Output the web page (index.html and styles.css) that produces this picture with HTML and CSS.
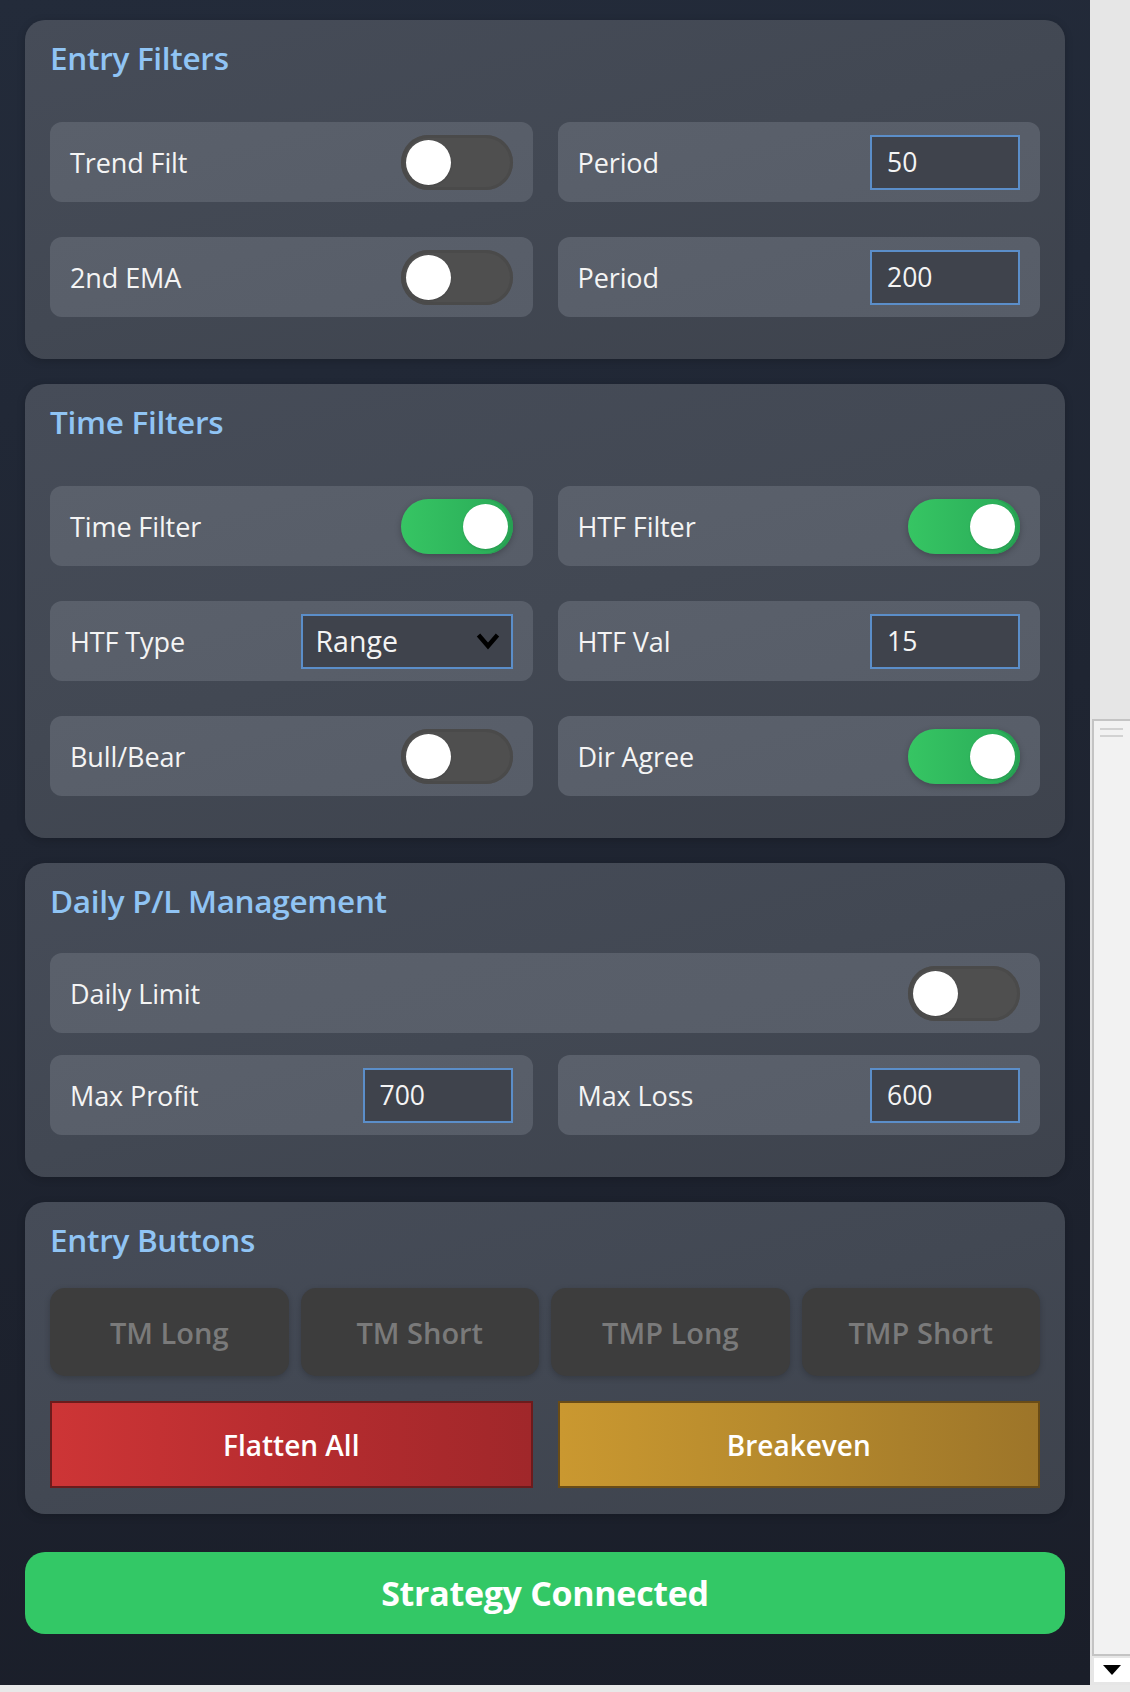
FILE: index.html
```html
<!DOCTYPE html>
<html lang="en">
<head>
<meta charset="utf-8">
<title>Strategy Panel</title>
<link rel="stylesheet" href="styles.css">
</head>
<body>
<div class="window">
  <div class="viewport">
    <main class="panel">
      <section class="card card-entry">
        <h2 class="card-title">Entry Filters</h2>
        <div class="grid">
          <div class="row"><span class="label">Trend Filt</span><span class="toggle"><span class="knob"></span></span></div>
          <div class="row"><span class="label">Period</span><span class="field">50</span></div>
          <div class="row"><span class="label">2nd EMA</span><span class="toggle"><span class="knob"></span></span></div>
          <div class="row"><span class="label">Period</span><span class="field">200</span></div>
        </div>
      </section>

      <section class="card card-time">
        <h2 class="card-title">Time Filters</h2>
        <div class="grid">
          <div class="row"><span class="label">Time Filter</span><span class="toggle on"><span class="knob"></span></span></div>
          <div class="row"><span class="label">HTF Filter</span><span class="toggle on"><span class="knob"></span></span></div>
          <div class="row"><span class="label">HTF Type</span>
            <span class="select"><span class="select-text">Range</span>
              <svg class="chevron" width="24" height="18" viewBox="0 0 24 18"><polyline points="2.5,3 12,14 21.5,3" fill="none" stroke="#000" stroke-width="4.5" stroke-linejoin="miter"/></svg>
            </span>
          </div>
          <div class="row"><span class="label">HTF Val</span><span class="field">15</span></div>
          <div class="row"><span class="label">Bull/Bear</span><span class="toggle"><span class="knob"></span></span></div>
          <div class="row"><span class="label">Dir Agree</span><span class="toggle on"><span class="knob"></span></span></div>
        </div>
      </section>

      <section class="card card-daily">
        <h2 class="card-title">Daily P/L Management</h2>
        <div class="grid grid-daily">
          <div class="row row-wide"><span class="label">Daily Limit</span><span class="toggle"><span class="knob"></span></span></div>
          <div class="row"><span class="label">Max Profit</span><span class="field">700</span></div>
          <div class="row"><span class="label">Max Loss</span><span class="field">600</span></div>
        </div>
      </section>

      <section class="card card-buttons">
        <h2 class="card-title">Entry Buttons</h2>
        <div class="entry-grid">
          <button class="entry-btn">TM Long</button>
          <button class="entry-btn">TM Short</button>
          <button class="entry-btn">TMP Long</button>
          <button class="entry-btn">TMP Short</button>
        </div>
        <div class="action-grid">
          <button class="action-btn flatten">Flatten All</button>
          <button class="action-btn breakeven">Breakeven</button>
        </div>
      </section>

      <button class="status">Strategy Connected</button>
    </main>

    <div class="vscroll">
      <div class="vtrack"></div>
      <div class="vthumb"><span class="grip"></span><span class="grip"></span></div>
      <div class="varrow">
        <svg width="18" height="10" viewBox="0 0 18 10"><polygon points="0,0 18,0 9,10" fill="#000"/></svg>
      </div>
    </div>
  </div>
  <div class="hstrip"></div>
</div>
</body>
</html>
```

FILE: styles.css
```css
html, body {
  margin: 0;
  padding: 0;
}

body {
  width: 1130px;
  height: 1692px;
  overflow: hidden;
  background: #e8e8e8;
  font-family: "Open Sans", "Noto Sans", "DejaVu Sans", sans-serif;
  color: #f2f2f2;
}

.window {
  display: flex;
  flex-direction: column;
  height: 1692px;
}

.viewport {
  display: flex;
  height: 1685px;
}

.panel {
  width: 1090px;
  box-sizing: border-box;
  padding: 20px 25px 0;
  background: linear-gradient(172deg, #232b3a 0%, #1f2532 45%, #1a1e29 100%);
  display: flex;
  flex-direction: column;
}

.card {
  border-radius: 20px;
  padding: 18px 25px 42px;
  background: linear-gradient(165deg, #464c58 0%, #424853 50%, #3e434d 100%);
  box-shadow: 0 2px 8px rgba(0, 0, 0, 0.18);
  margin-bottom: 25px;
}

.card-title {
  margin: 0 0 44px;
  font-size: 31.5px;
  line-height: 40px;
  font-weight: 600;
  color: #90c4f4;
  letter-spacing: -0.3px;
}

.card-daily .card-title {
  margin-bottom: 32px;
}

.card-buttons {
  padding-bottom: 26px;
}

.card-buttons .card-title {
  margin-bottom: 28px;
}

.grid {
  display: grid;
  grid-template-columns: 1fr 1fr;
  column-gap: 25px;
  row-gap: 35px;
}

.grid-daily {
  row-gap: 22px;
}

.row-wide {
  grid-column: 1 / 3;
}

.row {
  height: 80px;
  box-sizing: border-box;
  padding: 0 20px;
  border-radius: 12px;
  background: linear-gradient(165deg, #5a606b 0%, #575d68 100%);
  display: flex;
  align-items: center;
  justify-content: space-between;
}

.label {
  font-size: 27px;
  color: #f4f4f4;
  letter-spacing: -0.1px;
}

.toggle {
  width: 112px;
  height: 55px;
  box-sizing: border-box;
  padding: 5px;
  border-radius: 28px;
  background: #4f4f4f;
  box-shadow: inset 0 0 0 3px #4a4a4a;
  display: flex;
  align-items: center;
  justify-content: flex-start;
}

.toggle.on {
  justify-content: flex-end;
  background: linear-gradient(90deg, #36c563 0%, #2db25b 70%, #2aa957 100%);
  box-shadow: inset -3px 0 0 0 #27a052, 0 2px 6px rgba(0, 0, 0, 0.25);
}

.knob {
  width: 45px;
  height: 45px;
  border-radius: 50%;
  background: #ffffff;
  box-shadow: 0 1px 2px rgba(0, 0, 0, 0.15);
}

.field {
  width: 150px;
  height: 55px;
  box-sizing: border-box;
  border: 2px solid #5b8ec9;
  background: #3f434c;
  padding-left: 15px;
  display: flex;
  align-items: center;
  font-size: 26.5px;
  color: #f4f4f4;
}

.select {
  width: 212px;
  height: 55px;
  box-sizing: border-box;
  border: 2px solid #5b8ec9;
  background: #3f434c;
  padding: 0 11px 0 13px;
  display: flex;
  align-items: center;
  justify-content: space-between;
}

.select-text {
  font-size: 28.5px;
  color: #f4f4f4;
}

.chevron {
  display: block;
}

.entry-grid {
  display: grid;
  grid-template-columns: repeat(4, 1fr);
  column-gap: 12px;
  margin-bottom: 25px;
}

.entry-btn {
  height: 88px;
  border: none;
  border-radius: 15px;
  background: #3d3d3d;
  color: #7a7a7a;
  font-family: inherit;
  font-size: 29px;
  font-weight: 600;
  box-shadow: 0 2px 6px rgba(0, 0, 0, 0.2);
  padding: 0;
}

.action-grid {
  display: grid;
  grid-template-columns: 1fr 1fr;
  column-gap: 25px;
}

.action-btn {
  height: 87px;
  border-radius: 0;
  font-family: inherit;
  font-size: 28px;
  font-weight: 600;
  color: #ffffff;
  padding: 0;
}

.flatten {
  border: 2px solid #6c1b1c;
  background: linear-gradient(90deg, #cd3536 0%, #b92d30 45%, #a0272a 100%);
}

.breakeven {
  border: 2px solid #6a4c16;
  background: linear-gradient(90deg, #ca9830 0%, #b68a2d 45%, #9d7529 100%);
}

.status {
  margin-top: 13px;
  height: 82px;
  border: none;
  border-radius: 20px;
  background: #33c866;
  color: #ffffff;
  font-family: inherit;
  font-size: 34px;
  font-weight: 700;
  letter-spacing: -0.3px;
  padding: 0;
}

.vscroll {
  width: 40px;
  background: #e6e6e6;
  display: flex;
  flex-direction: column;
}

.vtrack {
  height: 719px;
}

.vthumb {
  height: 937px;
  margin-left: 2px;
  box-sizing: border-box;
  border: 2px solid #c4c4c4;
  border-right: none;
  background: #f2f2f2;
  padding: 7px 0 0 6px;
  display: flex;
  flex-direction: column;
  gap: 5px;
}

.grip {
  display: block;
  width: 23px;
  height: 2px;
  background: #d2d2d2;
}

.varrow {
  margin-top: 2px;
  margin-left: 4px;
  height: 24px;
  background: #ffffff;
  display: flex;
  align-items: center;
  justify-content: center;
}

.varrow svg {
  display: block;
}

.hstrip {
  height: 7px;
  background: #e8e8e8;
}
```
